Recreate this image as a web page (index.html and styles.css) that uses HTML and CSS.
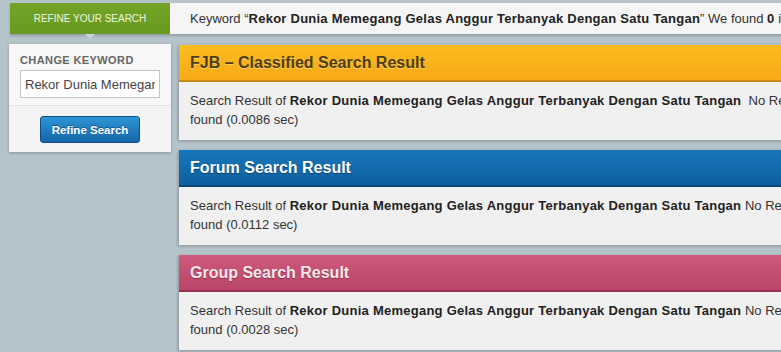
FILE: index.html
```html
<!DOCTYPE html>
<html lang="en">
<head>
    <meta charset="UTF-8">
    <title>Search Result</title>
    <link rel="stylesheet" href="styles.css">
</head>
<body>
    <div class="topbar">
        <div class="refine-tab">REFINE YOUR SEARCH</div>
        <div class="keyword-bar">
            Keyword &ldquo;<b>Rekor Dunia Memegang Gelas Anggur Terbanyak Dengan Satu Tangan</b>&rdquo; We found <b>0</b> items
        </div>
    </div>

    <div class="content">
        <div class="sidebar">
            <div class="side-top">
                <div class="side-label">CHANGE KEYWORD</div>
                <input type="text" class="keyword-input" value="Rekor Dunia Memegang Gelas Anggur Terbanyak Dengan Satu Tangan">
            </div>
            <div class="side-bottom">
                <button class="refine-btn">Refine Search</button>
            </div>
        </div>

        <div class="results">
            <div class="result">
                <div class="result-head fjb">FJB &ndash; Classified Search Result</div>
                <div class="result-body">
                    Search Result of <b>Rekor Dunia Memegang Gelas Anggur Terbanyak Dengan Satu Tangan</b>&nbsp; No Result found (0.0086 sec)
                </div>
            </div>
            <div class="result">
                <div class="result-head forum">Forum Search Result</div>
                <div class="result-body">
                    Search Result of <b>Rekor Dunia Memegang Gelas Anggur Terbanyak Dengan Satu Tangan</b> No Result found (0.0112 sec)
                </div>
            </div>
            <div class="result">
                <div class="result-head group">Group Search Result</div>
                <div class="result-body">
                    Search Result of <b>Rekor Dunia Memegang Gelas Anggur Terbanyak Dengan Satu Tangan</b> No Result found (0.0028 sec)
                </div>
            </div>
        </div>
    </div>
</body>
</html>
```

FILE: styles.css
```css
html, body {
    margin: 0;
    overflow: hidden;
}

body {
    background-color: #b5c3ca;
    font-family: "Liberation Sans", Arial, sans-serif;
    font-size: 13px;
    color: #333;
    width: 1000px;
}

.topbar {
    display: flex;
    margin: 3px 0 0 10px;
    height: 31px;
    box-shadow: 0 2px 2px rgba(0, 0, 0, 0.18);
}

.refine-tab {
    position: relative;
    width: 160px;
    background: linear-gradient(#74a326, #679a1e);
    color: #eef5e2;
    font-size: 10px;
    text-align: center;
    line-height: 31px;
}

.refine-tab:after {
    content: "";
    position: absolute;
    left: 75px;
    bottom: -5px;
    border-left: 5px solid transparent;
    border-right: 5px solid transparent;
    border-top: 5px solid #c9d3d8;
}

.keyword-bar {
    flex: 1;
    background-color: #f5f5f5;
    padding-left: 20px;
    line-height: 31px;
    white-space: nowrap;
    color: #333;
}

.keyword-bar b {
    color: #222;
    letter-spacing: 0.25px;
}

.content {
    display: flex;
    margin-top: 10px;
}

.sidebar {
    margin-left: 9px;
    width: 162px;
    height: 108px;
    background-color: #f4f4f4;
    box-shadow: 0 1px 3px rgba(0, 0, 0, 0.25);
}

.side-top {
    padding: 10px 11px 7px 11px;
    border-bottom: 1px solid #e2e2e2;
    background-color: #f7f7f7;
}

.side-label {
    font-size: 11px;
    font-weight: bold;
    letter-spacing: 0.4px;
    color: #666;
    margin-bottom: 4px;
}

.keyword-input {
    display: block;
    width: 140px;
    height: 28px;
    box-sizing: border-box;
    margin-left: 0;
    border: 1px solid #c4c4c4;
    background: #fff;
    padding: 0 4px;
    font-family: "Liberation Sans", Arial, sans-serif;
    font-size: 13px;
    color: #444;
}

.side-bottom {
    text-align: center;
    padding-top: 10px;
}

.refine-btn {
    width: 100px;
    height: 27px;
    border: 1px solid #0f4f85;
    border-radius: 3px;
    background: linear-gradient(#2f95d6, #1565a8);
    color: #fff;
    font-family: "Liberation Sans", Arial, sans-serif;
    font-size: 11.5px;
    font-weight: bold;
    text-shadow: 0 -1px 0 rgba(0, 0, 0, 0.35);
    cursor: pointer;
}

.results {
    margin-left: 8px;
    margin-top: 1px;
    flex: 1;
}

.result {
    margin-bottom: 10px;
    box-shadow: -1px 1px 3px rgba(0, 0, 0, 0.25);
}

.result-head {
    height: 35px;
    line-height: 35px;
    padding-left: 11px;
    font-size: 16px;
    font-weight: bold;
    border-bottom: 2px solid;
}

.fjb {
    background: linear-gradient(#fcbd1f, #f7a916);
    border-bottom-color: #c7870f;
    color: #4e3d12;
    text-shadow: 0 1px 0 rgba(255, 230, 160, 0.6);
}

.forum {
    background: linear-gradient(#1877bb, #0f5f9e);
    border-bottom-color: #0a4673;
    color: #fff;
    text-shadow: 0 1px 1px rgba(0, 0, 0, 0.4);
}

.group {
    background: linear-gradient(#cf5a7b, #b94567);
    border-bottom-color: #943050;
    color: #f8e6ec;
    text-shadow: 0 1px 1px rgba(0, 0, 0, 0.3);
}

.result-body {
    height: 58px;
    box-sizing: border-box;
    padding: 9px 11px 0 11px;
    width: 662px;
    background-color: #f0f0f0;
    line-height: 19px;
}

.result-body b {
    color: #222;
    letter-spacing: 0.25px;
}
```
